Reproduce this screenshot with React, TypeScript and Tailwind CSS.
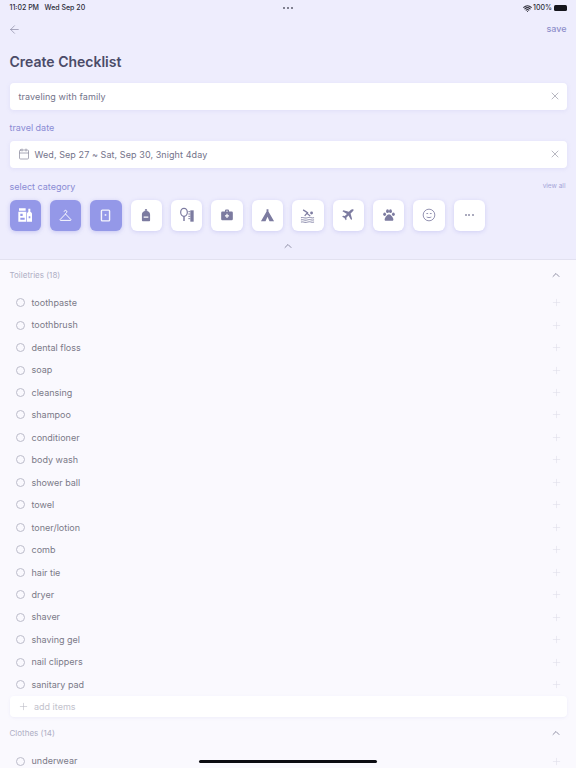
import { ArrowLeft, ChevronUp, Plus, X, Wifi, Calendar } from "lucide-react";
import type { ReactNode } from "react";

const toiletries = [
  "toothpaste",
  "toothbrush",
  "dental floss",
  "soap",
  "cleansing",
  "shampoo",
  "conditioner",
  "body wash",
  "shower ball",
  "towel",
  "toner/lotion",
  "comb",
  "hair tie",
  "dryer",
  "shaver",
  "shaving gel",
  "nail clippers",
  "sanitary pad",
];

function Glyph({ children }: { children: ReactNode }) {
  return (
    <svg viewBox="0 0 24 24" className="w-[14px] h-[14px]" fill="currentColor">
      {children}
    </svg>
  );
}

const categories: ReactNode[] = [
  // bottles
  <svg viewBox="0 0 24 24" className="w-[16px] h-[16px]" fill="currentColor">
    <path d="M3 2h10v3.500H3zM2 7h12v15H2zM17 2.500h3V7c1.700.8 2.500 2 2.500 3.500V22H15V10.500C15 9 15.800 7.800 17 7z" />
    <path d="M5 10h3.500v3.500H5zM5 16h6.500v3H5zM17.500 14h2.500v3h-2.500z" fill="#9498e8" />
  </svg>,
  // hanger
  <svg viewBox="0 0 24 24" className="w-[13px] h-[13px]" fill="none" stroke="currentColor" strokeWidth="1.800">
    <path d="M9.500 5a2.500 2.500 0 1 1 3.800 2.100c-.8.500-1.300 1-1.300 2.100L22 19.500c.6.700.2 1.500-.7 1.500H2.700c-.9 0-1.300-.8-.7-1.500L12 9.200" />
  </svg>,
  // phone
  <svg viewBox="0 0 24 24" className="w-[13px] h-[13px]" fill="none" stroke="currentColor" strokeWidth="2.600" opacity="0.9">
    <rect x="4.500" y="2" width="15" height="20" rx="1.500" />
    <rect x="10.500" y="9.500" width="3" height="3" fill="currentColor" strokeWidth="0" />
  </svg>,
  // backpack
  <Glyph>
    <path
      fillRule="evenodd"
      d="M10 3.500a2 2 0 0 1 4 0V5c3 .7 5 3 5 6v10a1.500 1.500 0 0 1-1.500 1.500h-11A1.500 1.500 0 0 1 5 21V11c0-3 2-5.300 5-6zm1.500 1.200h1V3.500a.5.500 0 0 0-1 0zM8 14.500v2h8v-2z"
    />
  </Glyph>,
  // mirror and comb
  <svg viewBox="0 0 24 24" className="w-[16px] h-[16px]" fill="none" stroke="currentColor" strokeWidth="1.800">
    <ellipse cx="7.500" cy="8" rx="5" ry="6" />
    <path d="M7.500 14v7" strokeWidth="2.200" />
    <path d="M17 5h5v17h-5z" fill="currentColor" stroke="none" />
    <path d="M14 7h3M14 10.500h3M14 14h3M14 17.500h3" strokeWidth="1.400" />
  </svg>,
  // first aid
  <Glyph>
    <path
      fillRule="evenodd"
      d="M8.500 6V4.500a2 2 0 0 1 2-2h3a2 2 0 0 1 2 2V6H20a2 2 0 0 1 2 2v11a2 2 0 0 1-2 2H4a2 2 0 0 1-2-2V8a2 2 0 0 1 2-2zm2-1.500V6h3V4.500zM11 10v2.500H8.500v2H11V17h2v-2.500h2.500v-2H13V10z"
    />
  </Glyph>,
  // tent
  <svg viewBox="0 0 24 24" className="w-[15px] h-[15px]" fill="currentColor">
    <path fillRule="evenodd" d="M10.500 2h3v3.500L22.500 21h-21l9-15.500zM12 14l-3.200 7h6.400z" />
  </svg>,
  // swimming
  <svg viewBox="0 0 24 24" className="w-[15px] h-[15px]" fill="none" stroke="currentColor" strokeWidth="1.400">
    <path d="M1.500 15.500c3.500-1 5.500 1 8.500.5s5-1.500 7-.7 3 .7 5.500.2M1.500 19c3.500-1 5.500 1 8.500.5s5-1.500 7-.7 3 .7 5.500.2M1.500 22.500c3.500-1 5.500 1 8.500.5s5-1.500 7-.7 3 .7 5.500.2" />
    <path d="M5 3l7 4.500-4.500 5M11 8.500l5.500 4.500" strokeWidth="2" />
    <circle cx="18.500" cy="8" r="2.300" fill="currentColor" stroke="none" />
  </svg>,
  // plane
  <Glyph>
    <path d="M21.300 2.700c-1.100-1.100-3-.9-4.200.3L13.500 6.600 4 4 2.500 5.500l7.700 4.700-3.700 3.700-3-.5L2 14.900l4 2.100 2.100 4 1.500-1.500-.5-3 3.700-3.700 4.700 7.700L19 19l-2.600-9.500 3.600-3.600c1.200-1.200 2.400-2.100 1.300-3.200z" />
  </Glyph>,
  // paw
  <svg viewBox="0 0 24 24" className="w-[14px] h-[14px]" fill="currentColor">
    <ellipse cx="4.500" cy="10.500" rx="2.400" ry="3" />
    <ellipse cx="9.500" cy="5.500" rx="2.500" ry="3.200" />
    <ellipse cx="14.500" cy="5.500" rx="2.500" ry="3.200" />
    <ellipse cx="19.500" cy="10.500" rx="2.400" ry="3" />
    <path d="M12 10.500c3 0 7.500 6 7.500 9 0 2-1.500 2.500-3 2.500H7.500c-1.500 0-3-.5-3-2.500 0-3 4.500-9 7.500-9z" />
  </svg>,
  // face
  <svg viewBox="0 0 24 24" className="w-[14px] h-[14px]" fill="none" stroke="currentColor" strokeWidth="1.400">
    <circle cx="12" cy="12" r="10" />
    <path d="M8 15.500c2.500 1.200 5.500 1.200 8 0M7.500 9.500h3M13.500 9.500h3" />
  </svg>,
  // more
  <div className="flex gap-[1.500px] text-[#8f8fa8]">
    <i className="w-[2px] h-[2px] rounded-full bg-current" />
    <i className="w-[2px] h-[2px] rounded-full bg-current" />
    <i className="w-[2px] h-[2px] rounded-full bg-current" />
  </div>,
];

function ItemRow({ name }: { name: string }) {
  return (
    <div className="h-[22.47px] flex items-center justify-between">
      <div className="flex items-center pl-[6px] gap-[7px]">
        <span className="w-[9px] h-[9px] rounded-full border border-[#bcbcca]" />
        <span className="text-[9px] text-[#7a7a88]">{name}</span>
      </div>
      <Plus className="w-[11px] h-[11px] text-[#dedee8] mr-[5px]" strokeWidth={1.25} />
    </div>
  );
}

export default function App() {
  return (
    <div className="relative w-[576px] h-[768px] overflow-hidden bg-[#faf9fe] font-['Inter',sans-serif] text-[#6b6b80]">
      <header className="h-[260px] bg-[#eeedfd] border-b border-[#e2e1f0] px-[9.5px]">
        <div className="h-[14px] flex items-center justify-between text-[7px] font-medium text-[#2c2c38] pt-[2px]">
          <div className="flex gap-[5.5px] w-[120px]">
            <span>11:02 PM</span>
            <span>Wed Sep 20</span>
          </div>
          <div className="flex gap-[1.5px] text-[#5c5c6c]">
            <i className="w-[2.5px] h-[2.5px] rounded-full bg-current" />
            <i className="w-[2.5px] h-[2.5px] rounded-full bg-current" />
            <i className="w-[2.5px] h-[2.5px] rounded-full bg-current" />
          </div>
          <div className="flex items-center justify-end gap-[1.5px] w-[120px]">
            <Wifi className="w-[9px] h-[9px]" strokeWidth={3} />
            <span>100%</span>
            <span className="w-[13px] h-[6px] rounded-[1.5px] bg-[#15151c]" />
          </div>
        </div>

        <div className="mt-[7px] h-[16px] flex items-center justify-between">
          <ArrowLeft className="w-[13px] h-[13px] text-[#8685a0] -ml-[2px]" strokeWidth={1.25} />
          <span className="text-[9px] font-medium text-[#8e8fcb]">save</span>
        </div>

        <h1 className="mt-[16px] text-[14px] leading-[18px] font-semibold text-[#4b4b68]">Create Checklist</h1>

        <div className="mt-[11.5px] h-[27px] rounded-[4px] bg-white shadow-[0_1px_4px_rgba(140,140,220,0.15)] flex items-center justify-between pl-[9px] pr-[6px]">
          <span className="text-[9px] tracking-[0.1px] text-[#73738a] pt-[1px]">traveling with family</span>
          <X className="w-[12px] h-[12px] text-[#8d8d9c]" strokeWidth={1.25} />
        </div>

        <div className="mt-[12px] h-[12px] flex items-center text-[9px] text-[#8a8bd4]">travel date</div>

        <div className="mt-[7px] h-[27px] rounded-[4px] bg-white shadow-[0_1px_4px_rgba(140,140,220,0.15)] flex items-center justify-between pl-[8px] pr-[6px]">
          <div className="flex items-center gap-[5px]">
            <Calendar className="w-[12px] h-[12px] text-[#8f8fa0]" strokeWidth={1.5} />
            <span className="text-[9px] tracking-[0.08px] text-[#73738a] pt-[1px]">Wed, Sep 27 ~ Sat, Sep 30, 3night 4day</span>
          </div>
          <X className="w-[12px] h-[12px] text-[#8d8d9c]" strokeWidth={1.25} />
        </div>

        <div className="mt-[13px] h-[12px] flex items-center justify-between">
          <span className="text-[9px] text-[#8a8bd4]">select category</span>
          <span className="text-[6.5px] text-[#a5a5d8] pr-[1px] pt-[1px]">view all</span>
        </div>

        <div className="mt-[7px] flex gap-[9px]">
          {categories.map((icon, i) => (
            <div
              key={i}
              className={
                i < 3
                  ? "w-[31.4px] h-[31.5px] rounded-[6px] bg-[#9498e8] text-white shadow-[0_1px_4px_rgba(120,120,220,0.35)] flex items-center justify-center"
                  : "w-[31.4px] h-[31.5px] rounded-[6px] bg-white text-[#7c7ba0] shadow-[0_1px_4px_rgba(120,120,220,0.25)] flex items-center justify-center"
              }
            >
              {icon}
            </div>
          ))}
        </div>

        <div className="mt-[9px] flex justify-center">
          <ChevronUp className="w-[12px] h-[12px] text-[#6f6f88]" strokeWidth={1.5} />
        </div>
      </header>

      <section className="px-[9.5px]">
        <div className="h-[29px] flex items-center justify-between">
          <span className="text-[8px] text-[#aeaec4]">Toiletries (18)</span>
          <ChevronUp className="w-[12px] h-[12px] text-[#6f6f88] mr-[5px]" strokeWidth={1.5} />
        </div>
        <div className="mt-[2.4px]">
          {toiletries.map((name) => (
            <ItemRow key={name} name={name} />
          ))}
        </div>
        <div className="mt-[0.6px] h-[21px] rounded-[4px] bg-white shadow-[0_1px_3px_rgba(140,140,220,0.1)] flex items-center pl-[8px] gap-[5.5px]">
          <Plus className="w-[11px] h-[11px] text-[#b9b9c4]" strokeWidth={1.25} />
          <span className="text-[9px] text-[#c2c2cc]">add items</span>
        </div>
        <div className="mt-[8px] h-[16px] flex items-center justify-between">
          <span className="text-[8px] text-[#aeaec4]">Clothes (14)</span>
          <ChevronUp className="w-[12px] h-[12px] text-[#6f6f88] mr-[5px]" strokeWidth={1.5} />
        </div>
        <div className="mt-[8.5px]">
          <ItemRow name="underwear" />
        </div>
      </section>

      <div className="absolute left-[199px] top-[760px] w-[178px] h-[3px] rounded-full bg-[#0c0c12]" />
    </div>
  );
}
